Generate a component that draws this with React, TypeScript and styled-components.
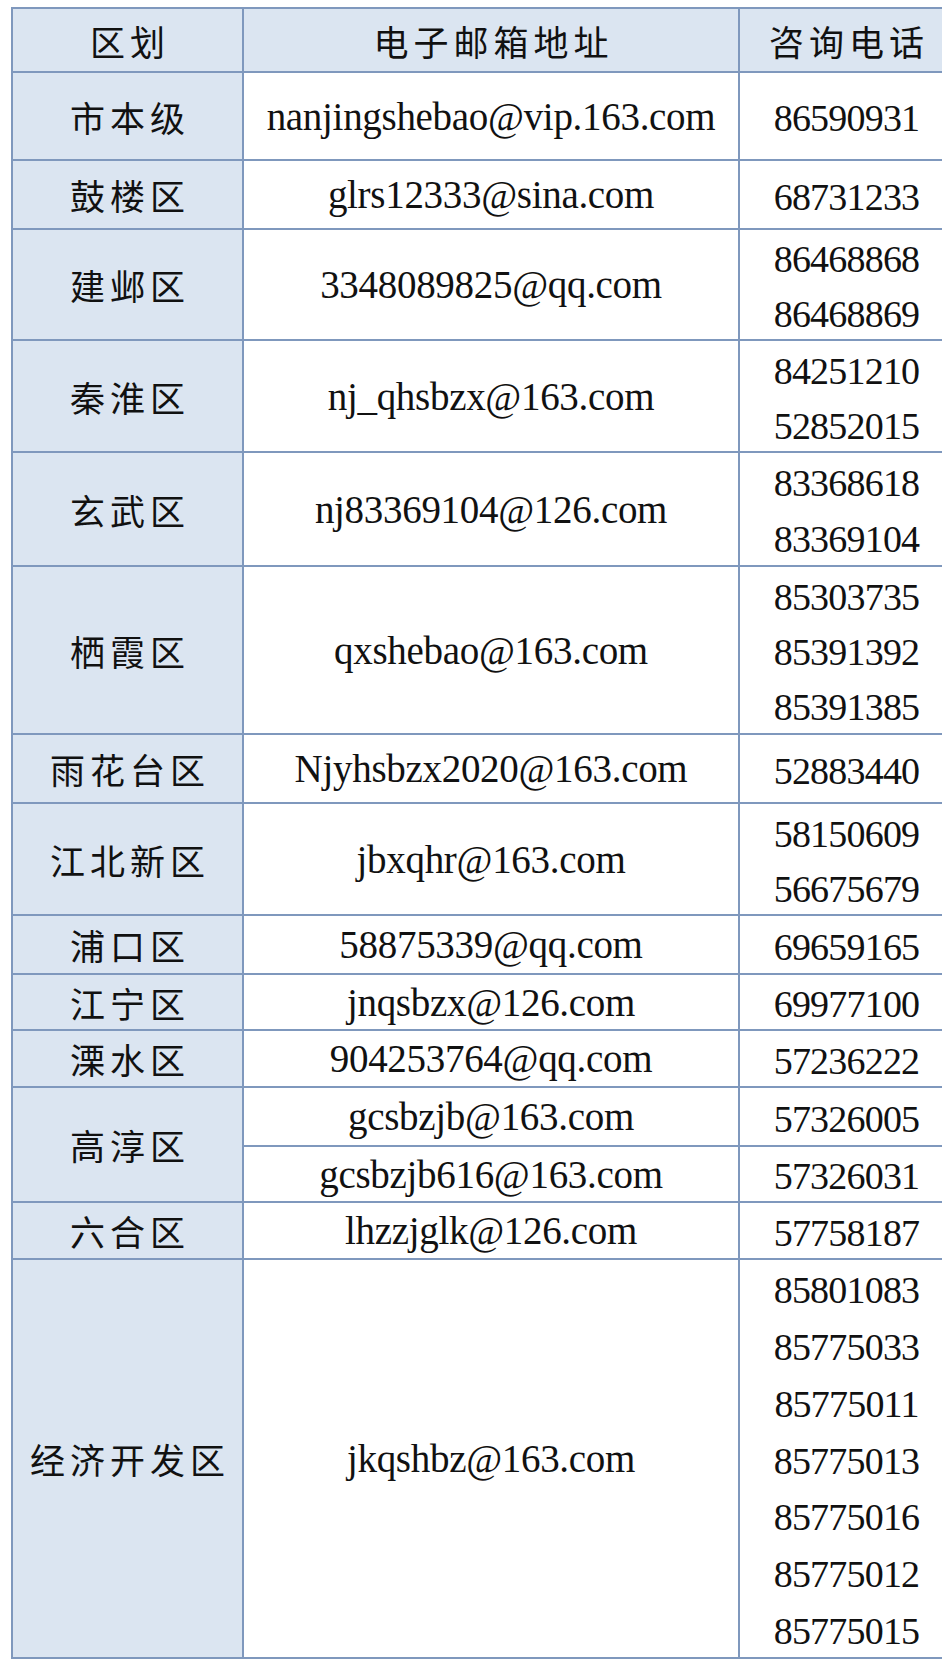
import React from "react";
import styled, { createGlobalStyle } from "styled-components";

interface Entry {
  email: string;
  phones: string[];
  height: number;
}

interface District {
  area: string;
  entries: Entry[];
}

const districts: District[] = [
  { area: "市本级", entries: [{ email: "nanjingshebao@vip.163.com", phones: ["86590931"], height: 88 }] },
  { area: "鼓楼区", entries: [{ email: "glrs12333@sina.com", phones: ["68731233"], height: 69 }] },
  { area: "建邺区", entries: [{ email: "3348089825@qq.com", phones: ["86468868", "86468869"], height: 111 }] },
  { area: "秦淮区", entries: [{ email: "nj_qhsbzx@163.com", phones: ["84251210", "52852015"], height: 112 }] },
  { area: "玄武区", entries: [{ email: "nj83369104@126.com", phones: ["83368618", "83369104"], height: 114 }] },
  {
    area: "栖霞区",
    entries: [{ email: "qxshebao@163.com", phones: ["85303735", "85391392", "85391385"], height: 168 }],
  },
  { area: "雨花台区", entries: [{ email: "Njyhsbzx2020@163.com", phones: ["52883440"], height: 69 }] },
  { area: "江北新区", entries: [{ email: "jbxqhr@163.com", phones: ["58150609", "56675679"], height: 112 }] },
  { area: "浦口区", entries: [{ email: "58875339@qq.com", phones: ["69659165"], height: 59 }] },
  { area: "江宁区", entries: [{ email: "jnqsbzx@126.com", phones: ["69977100"], height: 56 }] },
  { area: "溧水区", entries: [{ email: "904253764@qq.com", phones: ["57236222"], height: 57 }] },
  {
    area: "高淳区",
    entries: [
      { email: "gcsbzjb@163.com", phones: ["57326005"], height: 59 },
      { email: "gcsbzjb616@163.com", phones: ["57326031"], height: 56 },
    ],
  },
  { area: "六合区", entries: [{ email: "lhzzjglk@126.com", phones: ["57758187"], height: 57 }] },
  {
    area: "经济开发区",
    entries: [
      {
        email: "jkqshbz@163.com",
        phones: ["85801083", "85775033", "85775011", "85775013", "85775016", "85775012", "85775015"],
        height: 399,
      },
    ],
  },
];

const GlobalStyle = createGlobalStyle`
  html, body {
    margin: 0;
    padding: 0;
    background: #ffffff;
  }
`;

const Page = styled.div`
  width: 942px;
  min-height: 1678px;
  padding: 7px 0 0 11px;
  box-sizing: border-box;
  background: #ffffff;
`;

const Table = styled.table`
  border-collapse: collapse;
  table-layout: fixed;
  width: 921px;
  color: #111111;
`;

const cjk = `"Noto Sans CJK SC", "Noto Sans", sans-serif`;
const serif = `"Liberation Serif", "DejaVu Serif", serif`;

const Cell = styled.td`
  border: 2px solid #7f98bd;
  padding: 0;
  text-align: center;
  vertical-align: middle;
`;

const HeadCell = styled(Cell)<{ $w: number }>`
  width: ${(p) => p.$w}px;
  height: 62px;
  background: #dbe5f1;
  font-family: ${cjk};
  font-weight: 400;
  font-size: 35px;
  letter-spacing: 5px;
  padding-left: 5px;
`;

const AreaCell = styled(Cell)`
  background: #dbe5f1;
  font-family: ${cjk};
  font-weight: 400;
  font-size: 35px;
  letter-spacing: 5px;
  padding-left: 5px;
`;

const EmailCell = styled(Cell)`
  background: #ffffff;
  font-family: ${serif};
  font-size: 39px;
  letter-spacing: -0.3px;
`;

const PhoneCell = styled(Cell)`
  background: #ffffff;
`;

const PhoneStack = styled.div<{ $h: number }>`
  display: flex;
  flex-direction: column;
  height: ${(p) => p.$h}px;
`;

const PhoneLine = styled.div`
  flex: 1;
  display: flex;
  align-items: center;
  justify-content: center;
  padding-top: 4px;
  font-family: ${serif};
  font-size: 38px;
  letter-spacing: -0.8px;
`;

const App: React.FC = () => {
  return (
    <>
      <GlobalStyle />
      <Page>
        <Table>
          <thead>
            <tr>
              <HeadCell as="th" $w={224}>区划</HeadCell>
              <HeadCell as="th" $w={489}>电子邮箱地址</HeadCell>
              <HeadCell as="th" $w={208}>咨询电话</HeadCell>
            </tr>
          </thead>
          <tbody>
            {districts.flatMap((d) =>
              d.entries.map((e, i) => (
                <tr key={d.area + i}>
                  {i === 0 && <AreaCell rowSpan={d.entries.length}>{d.area}</AreaCell>}
                  <EmailCell>{e.email}</EmailCell>
                  <PhoneCell>
                    <PhoneStack $h={e.height - 2}>
                      {e.phones.map((p) => (
                        <PhoneLine key={p}>{p}</PhoneLine>
                      ))}
                    </PhoneStack>
                  </PhoneCell>
                </tr>
              ))
            )}
          </tbody>
        </Table>
      </Page>
    </>
  );
};

export default App;
